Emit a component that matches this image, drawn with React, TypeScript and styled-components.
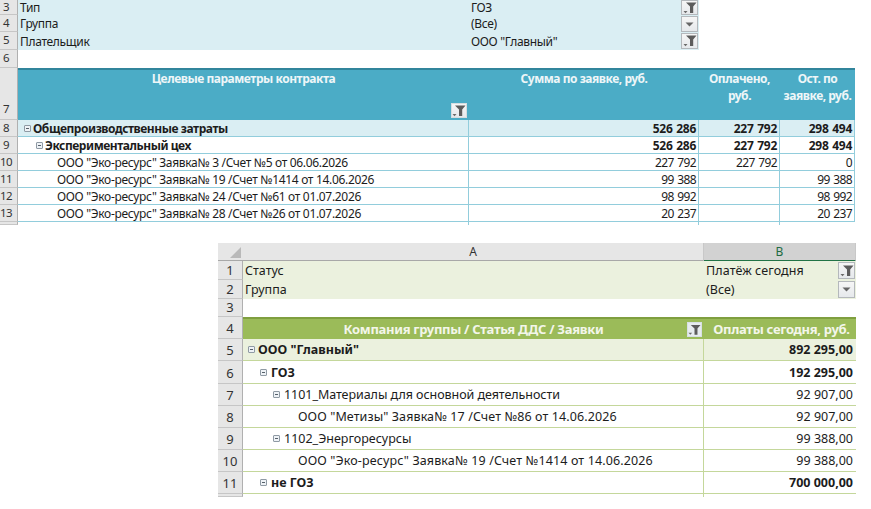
import React from "react";
import styled, { createGlobalStyle, css } from "styled-components";

const Global = createGlobalStyle`
  html, body { margin: 0; padding: 0; background: #fff; overflow: hidden; }
  #root { width: 871px; height: 509px; overflow: hidden; }
`;

const Page = styled.div`
  display: flex;
  flex-direction: column;
  width: 871px;
  height: 509px;
  font-family: "Noto Sans", "Open Sans", sans-serif;
  font-size: 12px;
  color: #1c1c1c;
`;

const Sheet = styled.div<{ $left: number; $top: number; $cols: string; $hdr: number }>`
  display: grid;
  grid-template-columns: ${(p) => p.$hdr}px ${(p) => p.$cols};
  width: max-content;
  margin-left: ${(p) => p.$left}px;
  margin-top: ${(p) => p.$top}px;
`;

const Corner = styled.div`
  height: 17px;
  background: #e6e6e6;
  border-right: 1px solid #b4b4b4;
  border-bottom: 1px solid #a8a8a8;
  box-sizing: content-box;
  position: relative;
  overflow: hidden;
  margin-right: -1px;
  &::after {
    content: "";
    position: absolute;
    right: 2px;
    bottom: 2px;
    border-style: solid;
    border-width: 0 0 11px 11px;
    border-color: transparent transparent #b9b9b9 transparent;
  }
`;

const ColHead = styled.div<{ $active?: boolean }>`
  height: 17px;
  line-height: 17px;
  text-align: center;
  font-size: 12px;
  color: ${(p) => (p.$active ? "#1f6b42" : "#333")};
  background: ${(p) => (p.$active ? "#d2d2d2" : "#e6e6e6")};
  border-bottom: ${(p) => (p.$active ? "2px solid #217346" : "1px solid #a8a8a8")};
  margin-bottom: ${(p) => (p.$active ? "-1px" : "0")};
  position: relative;
  border-right: 1px solid #c8c8c8;
  box-sizing: content-box;
`;

const RowNum = styled.div<{ $h: number; $pad: number; $size: number; $track?: number }>`
  height: ${(p) => p.$h}px;
  box-sizing: border-box;
  display: flex;
  align-items: flex-end;
  justify-content: center;
  padding-right: ${(p) => p.$pad}px;
  padding-bottom: ${(p) => Math.max(0, Math.min(3, (p.$h - 14) / 2))}px;
  background: #e6e6e6;
  border-right: 1px solid #b0b0b0;
  border-bottom: 1px solid #c6c6c6;
  color: #333;
  font-size: ${(p) => p.$size}px;
  letter-spacing: ${(p) => p.$track ?? 0}px;
  line-height: 14px;
  overflow: hidden;
`;

type Tone = "blue" | "green" | "white";

const tones = {
  white: css`background: #fff;`,
  blue: css`background: #daeef3;`,
  green: css`background: #ebf1de;`,
};

const Cell = styled.div<{
  $tone: Tone;
  $right?: boolean;
  $indent?: number;
  $pr?: number;
  $line?: string;
  $vline?: string;
  $h: number;
}>`
  height: ${(p) => p.$h}px;
  box-sizing: border-box;
  display: flex;
  align-items: center;
  justify-content: ${(p) => (p.$right ? "flex-end" : "flex-start")};
  padding: 0 ${(p) => p.$pr ?? (p.$right ? 2 : 0)}px 0 ${(p) => p.$indent ?? 2}px;
  ${(p) => tones[p.$tone]}
  border-bottom: ${(p) => (p.$line ? `1px solid ${p.$line}` : "none")};
  border-right: ${(p) => (p.$vline ? `1px solid ${p.$vline}` : "none")};
  white-space: nowrap;
  position: relative;
`;

const TopText = styled.span<{ $bold?: boolean }>`
  display: inline-flex;
  align-items: center;
  font-size: 12px;
  font-weight: ${(p) => (p.$bold ? 700 : 400)};
  letter-spacing: ${(p) => (p.$bold ? "-0.45px" : "-0.32px")};
`;

const Num = styled.span<{ $bold?: boolean }>`
  font-size: 12px;
  font-weight: ${(p) => (p.$bold ? 700 : 400)};
  letter-spacing: ${(p) => (p.$bold ? "-0.3px" : "-0.6px")};
  word-spacing: 1px;
`;

const Large = styled.span<{ $bold?: boolean; $track?: number }>`
  display: inline-flex;
  align-items: center;
  font-size: 12.5px;
  font-weight: ${(p) => (p.$bold ? 700 : 400)};
  letter-spacing: ${(p) => p.$track ?? 0}px;
`;

const Head = styled.div<{ $h: number }>`
  height: ${(p) => p.$h}px;
  box-sizing: border-box;
  background: #4bacc6;
  border-top: 2px solid #31859c;
  color: #eef6f8;
  font-weight: 700;
  text-align: center;
  line-height: 17px;
  font-size: 12px;
  letter-spacing: -0.46px;
  position: relative;
`;

const GreenHead = styled.div<{ $h: number; $shift?: number }>`
  height: ${(p) => p.$h}px;
  box-sizing: border-box;
  background: #9bbb59;
  border-top: 2px solid #7f9f3f;
  color: #f3f6ea;
  font-weight: 700;
  text-align: center;
  line-height: 20px;
  font-size: 13px;
  letter-spacing: -0.3px;
  padding-left: ${(p) => p.$shift ?? 0}px;
  position: relative;
`;

const FilterBtn = styled.div<{ $w?: number; $h?: number; $top?: number }>`
  position: absolute;
  right: 1px;
  top: ${(p) => p.$top ?? 0}px;
  width: ${(p) => p.$w ?? 17}px;
  height: ${(p) => p.$h ?? 16}px;
  box-sizing: border-box;
  background: linear-gradient(#f6f6f6, #e6e9ec);
  border: 1px solid #b4b8bc;
  display: flex;
  align-items: center;
  justify-content: center;
`;

const FilterBtnBottom = styled(FilterBtn)`
  top: auto;
  bottom: 2px;
  right: 2px;
  width: 16px;
  height: 15px;
  border-color: #d6dde0;
`;

const FilterBtnGreen = styled(FilterBtn)`
  top: 3px;
  right: 2px;
  width: 15px;
  height: 15px;
  background: #e7ecef;
  border-color: #d8e0e4;
`;

const Toggle = styled.span<{ $gap?: number }>`
  display: inline-block;
  width: 7px;
  height: 7px;
  box-sizing: border-box;
  border: 1px solid #8f9aa4;
  border-radius: 1px;
  background: #eef2f6;
  margin-right: ${(p) => p.$gap ?? 2}px;
  position: relative;
  flex: none;
  &::after {
    content: "";
    position: absolute;
    left: 1px;
    right: 1px;
    top: 2px;
    height: 1px;
    background: #56606a;
  }
`;

const FunnelIcon = () => (
  <svg width="14" height="12" viewBox="0 0 14 12" aria-hidden="true">
    <path d="M3 0.5H13.5L10.2 4.5V11H7V4.5Z" fill="#5c5c5c" />
    <path d="M0.5 9H4.5L2.5 11.2Z" fill="#6a6a6a" />
  </svg>
);

const ArrowIcon = () => (
  <svg width="9" height="5" viewBox="0 0 9 5" aria-hidden="true">
    <path d="M0.5 0.5H8.5L4.5 4.5Z" fill="#666" />
  </svg>
);

const BLUE_LINE = "#92cddc";
const GREEN_LINE = "#c4d79b";

const topRows = [
  { n: "10", text: 'ООО "Эко-ресурс" Заявка№ 3 /Счет №5 от 06.06.2026', v: ["227 792", "227 792", "0"] },
  { n: "11", text: 'ООО "Эко-ресурс" Заявка№ 19 /Счет №1414 от 14.06.2026', v: ["99 388", "", "99 388"] },
  { n: "12", text: 'ООО "Эко-ресурс" Заявка№ 24 /Счет №61 от 01.07.2026', v: ["98 992", "", "98 992"] },
  { n: "13", text: 'ООО "Эко-ресурс" Заявка№ 28 /Счет №26 от 01.07.2026', v: ["20 237", "", "20 237"] },
];

const topFilters = [
  { n: "3", label: "Тип", value: "ГОЗ", filtered: true, h: 15, btnTop: 0, btnH: 15 },
  { n: "4", label: "Группа", value: "(Все)", filtered: false, h: 17, btnTop: 1, btnH: 16 },
  { n: "5", label: "Плательщик", value: 'ООО "Главный"', filtered: true, h: 18, btnTop: 1, btnH: 16 },
];

const TopNum = ({ children, h = 17 }: { children?: React.ReactNode; h?: number }) => (
  <RowNum $h={h} $pad={5} $size={11.5} $track={-0.5}>{children}</RowNum>
);

const boldTopValues = [
  { n: "8", tone: "blue" as Tone, label: "Общепроизводственные затраты", indent: 6 },
  { n: "9", tone: "white" as Tone, label: "Экспериментальный цех", indent: 18 },
];

const TopSheet = () => (
  <Sheet $left={0} $top={0} $hdr={18} $cols="451px 230px 81px 75px">
    {topFilters.map((f) => (
      <React.Fragment key={f.n}>
        <TopNum h={f.h}>{f.n}</TopNum>
        <Cell $tone="blue" $h={f.h}><TopText>{f.label}</TopText></Cell>
        <Cell $tone="blue" $h={f.h} $indent={2}>
          <TopText>{f.value}</TopText>
          <FilterBtn $h={f.btnH} $top={f.btnTop}>{f.filtered ? <FunnelIcon /> : <ArrowIcon />}</FilterBtn>
        </Cell>
        <div />
        <div />
      </React.Fragment>
    ))}
    <TopNum h={18}>6</TopNum>
    <Cell $tone="white" $h={18} />
    <Cell $tone="white" $h={18} />
    <div />
    <div />
    <TopNum h={52}>7</TopNum>
    <Head $h={52}>
      Целевые параметры контракта
      <FilterBtnBottom><FunnelIcon /></FilterBtnBottom>
    </Head>
    <Head $h={52}>Сумма по заявке, руб.</Head>
    <Head $h={52}>Оплачено,<br />руб.</Head>
    <Head $h={52}>Ост. по<br />заявке, руб.</Head>

    {boldTopValues.map((r) => (
      <React.Fragment key={r.n}>
        <TopNum>{r.n}</TopNum>
        <Cell $tone={r.tone} $h={17} $indent={r.indent} $line={BLUE_LINE} $vline={BLUE_LINE}>
          <TopText $bold><Toggle />{r.label}</TopText>
        </Cell>
        {["526 286", "227 792", "298 494"].map((x) => (
          <Cell key={x} $tone={r.tone} $h={17} $right $line={BLUE_LINE} $vline={BLUE_LINE}><Num $bold>{x}</Num></Cell>
        ))}
      </React.Fragment>
    ))}

    {topRows.map((r) => (
      <React.Fragment key={r.n}>
        <TopNum>{r.n}</TopNum>
        <Cell $tone="white" $h={17} $indent={39} $line={BLUE_LINE} $vline={BLUE_LINE}><TopText>{r.text}</TopText></Cell>
        {r.v.map((x, i) => (
          <Cell key={i} $tone="white" $h={17} $right $line={BLUE_LINE} $vline={BLUE_LINE}><Num>{x}</Num></Cell>
        ))}
      </React.Fragment>
    ))}
    <TopNum h={3} />
    <Cell $tone="white" $h={3} $vline={BLUE_LINE} />
    <Cell $tone="white" $h={3} $vline={BLUE_LINE} />
    <Cell $tone="white" $h={3} $vline={BLUE_LINE} />
    <Cell $tone="white" $h={3} />
  </Sheet>
);

const bottomRows = [
  { n: "7", text: "1101_Материалы для основной деятельности", v: "92 907,00", indent: 30, toggle: true, track: -0.05 },
  { n: "8", text: 'ООО "Метизы" Заявка№ 17 /Счет №86 от 14.06.2026', v: "92 907,00", indent: 55, toggle: false, track: 0.1 },
  { n: "9", text: "1102_Энергоресурсы", v: "99 388,00", indent: 30, toggle: true, track: 0 },
  { n: "10", text: 'ООО "Эко-ресурс" Заявка№ 19 /Счет №1414 от 14.06.2026', v: "99 388,00", indent: 55, toggle: false, track: 0.13 },
];

const BottomNum = ({ children, h }: { children?: React.ReactNode; h: number }) => (
  <RowNum $h={h} $pad={0} $size={13}>{children}</RowNum>
);

const BottomSheet = () => (
  <Sheet $left={218} $top={18} $hdr={25} $cols="461px 152px">
    <Corner />
    <ColHead>A</ColHead>
    <ColHead $active>B</ColHead>

    <BottomNum h={19}>1</BottomNum>
    <Cell $tone="green" $h={19}><Large>Статус</Large></Cell>
    <Cell $tone="green" $h={19} $indent={2}>
      <Large $track={0.1}>Платёж сегодня</Large>
      <FilterBtn $h={17} $top={1}><FunnelIcon /></FilterBtn>
    </Cell>

    <BottomNum h={19}>2</BottomNum>
    <Cell $tone="green" $h={19}><Large>Группа</Large></Cell>
    <Cell $tone="green" $h={19} $indent={2}>
      <Large>(Все)</Large>
      <FilterBtn $h={17} $top={1}><ArrowIcon /></FilterBtn>
    </Cell>

    <BottomNum h={18}>3</BottomNum>
    <Cell $tone="white" $h={18} />
    <Cell $tone="white" $h={18} />

    <BottomNum h={22}>4</BottomNum>
    <GreenHead $h={22}>
      Компания группы / Статья ДДС / Заявки
      <FilterBtnGreen><FunnelIcon /></FilterBtnGreen>
    </GreenHead>
    <GreenHead $h={22} $shift={3}>Оплаты сегодня, руб.</GreenHead>

    <BottomNum h={22}>5</BottomNum>
    <Cell $tone="green" $h={22} $indent={5} $line={GREEN_LINE} $vline={GREEN_LINE}>
      <Large $bold><Toggle $gap={3} />ООО "Главный"</Large>
    </Cell>
    <Cell $tone="green" $h={22} $right $pr={3} $line={GREEN_LINE}><Large $bold>892 295,00</Large></Cell>

    <BottomNum h={23}>6</BottomNum>
    <Cell $tone="white" $h={23} $indent={17} $line={GREEN_LINE} $vline={GREEN_LINE}>
      <Large $bold><Toggle $gap={4} />ГОЗ</Large>
    </Cell>
    <Cell $tone="white" $h={23} $right $pr={3} $line={GREEN_LINE}><Large $bold>192 295,00</Large></Cell>

    {bottomRows.map((r) => (
      <React.Fragment key={r.n}>
        <BottomNum h={22}>{r.n}</BottomNum>
        <Cell $tone="white" $h={22} $indent={r.indent} $line={GREEN_LINE} $vline={GREEN_LINE}>
          <Large $track={r.track}>{r.toggle && <Toggle $gap={4} />}{r.text}</Large>
        </Cell>
        <Cell $tone="white" $h={22} $right $pr={3} $line={GREEN_LINE}><Large>{r.v}</Large></Cell>
      </React.Fragment>
    ))}

    <BottomNum h={22}>11</BottomNum>
    <Cell $tone="white" $h={22} $indent={17} $line={GREEN_LINE} $vline={GREEN_LINE}>
      <Large $bold><Toggle $gap={4} />не ГОЗ</Large>
    </Cell>
    <Cell $tone="white" $h={22} $right $pr={3} $line={GREEN_LINE}><Large $bold>700 000,00</Large></Cell>

    <BottomNum h={3} />
    <Cell $tone="white" $h={3} $vline={GREEN_LINE} />
    <Cell $tone="white" $h={3} />
  </Sheet>
);

export default function App() {
  return (
    <Page>
      <Global />
      <TopSheet />
      <BottomSheet />
    </Page>
  );
}
